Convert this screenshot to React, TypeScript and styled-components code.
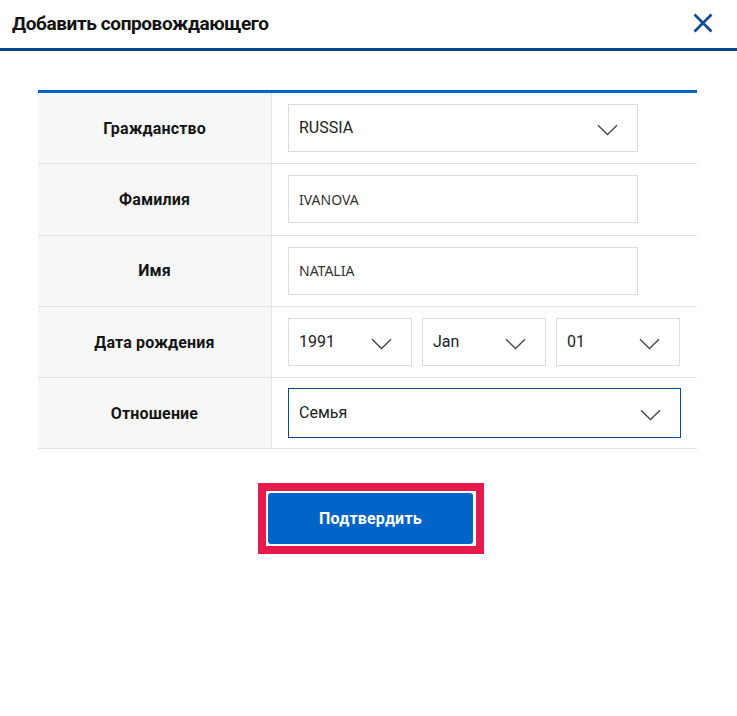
import styled, { createGlobalStyle } from "styled-components";

const GlobalStyle = createGlobalStyle`
  html, body {
    margin: 0;
    padding: 0;
    background: #ffffff;
  }
  * {
    box-sizing: border-box;
  }
`;

const Chevron = () => (
  <svg width="21" height="12" viewBox="0 0 21 12" fill="none">
    <path d="M1 1.2L10.5 10.5L20 1.2" stroke="#444" strokeWidth="1.3" />
  </svg>
);

const CloseIcon = () => (
  <svg width="20" height="20" viewBox="0 0 20 20" fill="none">
    <path d="M1.5 1.5L18.5 18.5M18.5 1.5L1.5 18.5" stroke="#0b4a93" strokeWidth="2.6" />
  </svg>
);

type SelectProps = { value: string; width: number; active?: boolean };

const Select = ({ value, width, active }: SelectProps) => (
  <SelectBox $width={width} $active={active}>
    <span>{value}</span>
    <Chevron />
  </SelectBox>
);

const rows = [
  { label: "Гражданство", kind: "select", value: "RUSSIA" },
  { label: "Фамилия", kind: "input", value: "IVANOVA" },
  { label: "Имя", kind: "input", value: "NATALIA" },
  { label: "Дата рождения", kind: "date", value: "" },
  { label: "Отношение", kind: "relation", value: "Семья" },
];

export default function App() {
  return (
    <Page>
      <GlobalStyle />
      <Header>
        <Title>Добавить сопровождающего</Title>
        <CloseButton aria-label="close">
          <CloseIcon />
        </CloseButton>
      </Header>
      <Body>
        <Table>
          {rows.map((row) => (
            <Row key={row.label}>
              <Label>{row.label}</Label>
              <Cell>
                {row.kind === "select" && <Select value={row.value} width={350} />}
                {row.kind === "input" && <TextInput>{row.value}</TextInput>}
                {row.kind === "date" && (
                  <DateGroup>
                    <Select value="1991" width={124} />
                    <Select value="Jan" width={124} />
                    <Select value="01" width={124} />
                  </DateGroup>
                )}
                {row.kind === "relation" && <Select value={row.value} width={393} active />}
              </Cell>
            </Row>
          ))}
        </Table>
        <Actions>
          <Highlight>
            <ConfirmButton>Подтвердить</ConfirmButton>
          </Highlight>
        </Actions>
      </Body>
    </Page>
  );
}

const Page = styled.div`
  width: 737px;
  height: 716px;
  background: #fff;
  font-family: Roboto, "Liberation Sans", Arial, sans-serif;
  color: #1b1b1b;
  overflow: hidden;
`;

const Header = styled.header`
  height: 51px;
  display: flex;
  align-items: center;
  justify-content: space-between;
  padding: 0 24px 2px 12px;
  border-bottom: 3px solid #00468f;
`;

const Title = styled.h1`
  margin: 0;
  font-size: 19px;
  font-weight: 700;
  letter-spacing: -0.4px;
  color: #111;
`;

const CloseButton = styled.button`
  border: none;
  background: none;
  padding: 0;
  width: 20px;
  height: 20px;
  display: flex;
  cursor: pointer;
`;

const Body = styled.main`
  padding: 39px 40px 0 38px;
`;

const Table = styled.div`
  border-top: 3px solid #0062c4;
`;

const Row = styled.div`
  display: grid;
  grid-template-columns: 234px 1fr;
  height: 71.3px;
  border-bottom: 1px solid #e2e2e2;
`;

const Label = styled.div`
  background: #f7f7f7;
  border-right: 1px solid #e2e2e2;
  display: flex;
  align-items: center;
  justify-content: center;
  font-size: 16px;
  font-weight: 700;
  letter-spacing: 0.15px;
  color: #151515;
`;

const Cell = styled.div`
  display: flex;
  align-items: center;
  padding-left: 16px;
`;

const SelectBox = styled.div<{ $width: number; $active?: boolean }>`
  width: ${(p) => p.$width}px;
  height: ${(p) => (p.$active ? 50 : 48)}px;
  border: 1px solid ${(p) => (p.$active ? "#0b4a8f" : "#dcdcdc")};
  background: #fff;
  display: flex;
  align-items: center;
  justify-content: space-between;
  padding: 2px 19px 0 10px;
  font-size: 16px;
  color: #222;

  span {
    margin-top: -4px;
  }
  svg {
    margin-top: 2px;
  }
`;

const TextInput = styled.div`
  width: 350px;
  height: 48px;
  border: 1px solid #dcdcdc;
  display: flex;
  align-items: center;
  padding: 0 10px;
  font-family: "Noto Sans", Roboto, sans-serif;
  font-size: 14px;
  color: #333;
`;

const DateGroup = styled.div`
  display: flex;
  gap: 10px;
`;

const Actions = styled.div`
  display: flex;
  justify-content: center;
  padding-top: 34px;
  padding-left: 7px;
`;

const Highlight = styled.div`
  border: 8px solid #e8194b;
  padding: 2px 3px 2px 2px;
  background: #fff;
`;

const ConfirmButton = styled.button`
  width: 205px;
  height: 51px;
  border: none;
  border-radius: 3px;
  background: #0064c8;
  color: #fff;
  font-family: Roboto, "Liberation Sans", Arial, sans-serif;
  font-size: 16px;
  font-weight: 700;
  letter-spacing: 0.2px;
  display: block;
  cursor: pointer;
`;
